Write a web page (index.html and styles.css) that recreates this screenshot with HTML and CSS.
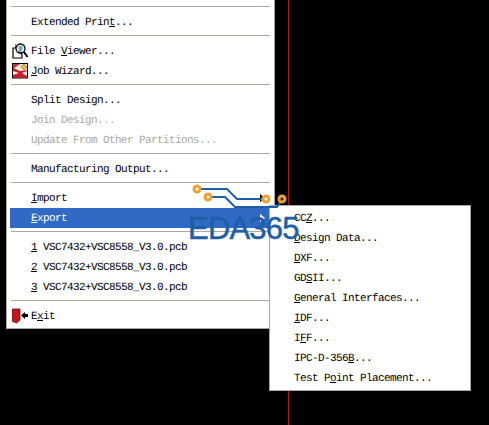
FILE: index.html
```html
<!DOCTYPE html>
<html lang="en">
<head>
    <meta charset="UTF-8">
    <title>File menu</title>
    <link rel="stylesheet" href="styles.css">
</head>
<body>
    <div class="red-line"></div>

    <div class="menu main-menu">
        <div class="sep"></div>
        <div class="item">Extended Prin<u>t</u>...</div>
        <div class="sep"></div>
        <div class="item">
            <svg class="icon" viewBox="0 0 16 16">
                <path d="M1 5h3v-2l6 9v3h-9z" fill="#fff" stroke="#000" stroke-width="1.200"/>
                <circle cx="8.500" cy="5.500" r="4.500" fill="#eef" stroke="#000" stroke-width="1.300"/>
                <path d="M6.500 4h4M6.500 6h4M6.500 8h3" stroke="#066" stroke-width="1"/>
                <path d="M12 9l3.500 5" stroke="#000" stroke-width="2"/>
            </svg>
            File <u>V</u>iewer...
        </div>
        <div class="item">
            <svg class="icon" viewBox="0 0 16 16">
                <rect x="0.500" y="0.500" width="15" height="14.500" fill="#f8ece0" stroke="#000"/>
                <path d="M1 1h7l-7 5z" fill="#d03038"/>
                <path d="M1 8l6 2-6 2v3h14v-2l-5-3 5-2v-1l-7 1-7-3z" fill="#c8202a"/>
                <path d="M9 4l3-3 3 3-3 3z" fill="#e8c030" stroke="#806020" stroke-width="0.600"/>
            </svg>
            <u>J</u>ob Wizard...
        </div>
        <div class="sep"></div>
        <div class="item">Split Design...</div>
        <div class="item disabled">Join Design...</div>
        <div class="item disabled">Update From Other Partitions...</div>
        <div class="sep"></div>
        <div class="item">Manufacturing Output...</div>
        <div class="sep"></div>
        <div class="item has-sub"><u>I</u>mport</div>
        <div class="item has-sub active"><u>E</u>xport</div>
        <div class="sep"></div>
        <div class="item"><u>1</u>&nbsp;VSC7432+VSC8558_V3.0.pcb</div>
        <div class="item"><u>2</u>&nbsp;VSC7432+VSC8558_V3.0.pcb</div>
        <div class="item"><u>3</u>&nbsp;VSC7432+VSC8558_V3.0.pcb</div>
        <div class="sep"></div>
        <div class="item">
            <svg class="icon" viewBox="0 0 16 16">
                <path d="M0.500 1h7.500v11l-3.500 3-4-1.500z" fill="#c8141c" stroke="#700" stroke-width="0.800"/>
                <path d="M9 7.500l4-3.500v2h3v3h-3v2z" fill="#000"/>
            </svg>
            E<u>x</u>it
        </div>
    </div>

    <div class="menu sub-menu">
        <div class="item">CC<u>Z</u>...</div>
        <div class="item"><u>D</u>esign Data...</div>
        <div class="item"><u>D</u>XF...</div>
        <div class="item">GD<u>S</u>II...</div>
        <div class="item"><u>G</u>eneral Interfaces...</div>
        <div class="item"><u>I</u>DF...</div>
        <div class="item">I<u>F</u>F...</div>
        <div class="item">IPC-D-356<u>B</u>...</div>
        <div class="item">Test P<u>o</u>int Placement...</div>
    </div>

    <div class="watermark">
        <svg class="traces" viewBox="0 0 110 30">
            <path d="M7 9h30l10 10h29M18 17h17l10 10h42l5-8" fill="none" stroke="#1d5fa6" stroke-width="2"/>
            <circle cx="7" cy="9" r="3" fill="#fff" stroke="#f0a030" stroke-width="3"/>
            <circle cx="18" cy="17" r="3" fill="#fff" stroke="#f0a030" stroke-width="3"/>
            <circle cx="76" cy="19" r="3" fill="#fff" stroke="#f0a030" stroke-width="3"/>
            <circle cx="92" cy="19" r="3" fill="#222" stroke="#f0a030" stroke-width="3"/>
        </svg>
        <span class="wm-text">EDA365</span>
    </div>
</body>
</html>
```
FILE: styles.css
```css
html, body {
    margin: 0;
    padding: 0;
    height: 100%;
    overflow: hidden;
    background: #000;
}

.red-line {
    position: absolute;
    left: 288px;
    top: 0;
    width: 1px;
    height: 425px;
    background: #b01818;
}

.menu {
    position: absolute;
    box-sizing: border-box;
    background: #fff;
    border: 1px solid #a8a8a0;
    font-family: "Liberation Mono", monospace;
    font-size: 11px;
    letter-spacing: -0.6px;
    text-rendering: geometricPrecision;
    color: #000;
}

.main-menu {
    left: 6px;
    top: -1px;
    width: 269px;
    height: 330px;
    padding: 3px 3px 2px;
}

.sub-menu {
    left: 269px;
    top: 205px;
    width: 202px;
    height: 186px;
    padding: 2px 3px;
}

.item {
    position: relative;
    height: 20px;
    line-height: 22px;
    padding-left: 21px;
    white-space: nowrap;
}

.sep {
    height: 1px;
    margin: 3px 1px 4px;
    border-top: 1px solid #a8a8a0;
}

.disabled {
    color: #a8a89c;
}

.active {
    background: #316ac5;
    color: #fff;
}

.has-sub::after {
    content: "";
    position: absolute;
    right: 6px;
    top: 6px;
    border-left: 5px solid #000;
    border-top: 4px solid transparent;
    border-bottom: 4px solid transparent;
}

.active::after {
    border-left-color: #fff;
}

.icon {
    position: absolute;
    left: 2px;
    top: 2px;
    width: 16px;
    height: 16px;
}

.watermark {
    position: absolute;
    left: 190px;
    top: 180px;
    width: 110px;
    height: 62px;
}

.traces {
    display: block;
    width: 110px;
    height: 30px;
}

.wm-text {
    position: absolute;
    left: -2px;
    top: 33px;
    font-family: "Liberation Sans", sans-serif;
    font-size: 31px;
    line-height: 32px;
    letter-spacing: -0.8px;
    color: #1d5fa6;
    -webkit-text-stroke: 0.5px #1d5fa6;
}
```
